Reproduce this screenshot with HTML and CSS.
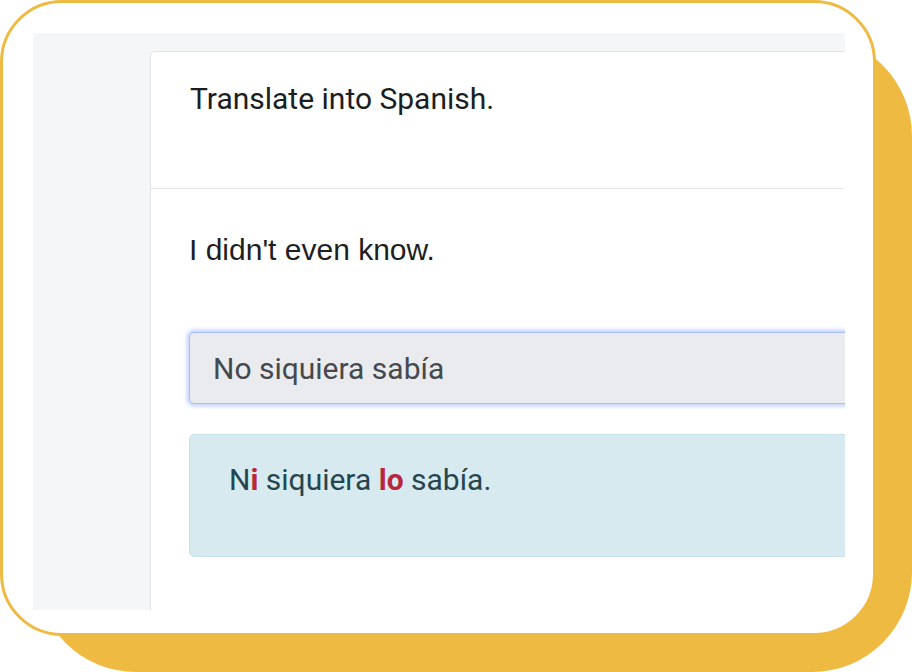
FILE: index.html
```html
<!DOCTYPE html>
<html>
<head>
<meta charset="utf-8">
<link rel="stylesheet" href="styles.css">
</head>
<body>
<div class="frame">
  <div class="backdrop"></div>
  <div class="window">
    <div class="app">
      <div class="card">
        <div class="card-header">
          <p class="prompt">Translate into Spanish.</p>
        </div>
        <div class="card-body">
          <p class="source">I didn't even know.</p>
          <div class="answer">No siquiera sabía</div>
          <div class="correction">N<b class="fix">i</b> siquiera <b class="fix">lo</b> sabía.</div>
        </div>
      </div>
    </div>
  </div>
</div>
</body>
</html>
```
FILE: styles.css
```css
html, body {
  margin: 0;
  padding: 0;
  background: #ffffff;
}

.frame {
  position: relative;
  width: 912px;
  height: 672px;
  overflow: hidden;
}

.backdrop {
  position: absolute;
  left: 36px;
  top: 36px;
  width: 876px;
  height: 636px;
  background: #efba41;
  border-radius: 100px;
}

.window {
  position: relative;
  box-sizing: border-box;
  width: 876px;
  height: 636px;
  border: 3px solid #efba41;
  border-radius: 62px;
  background: #ffffff;
  padding: 30px 28px 23px 30px;
  overflow: hidden;
}

.app {
  height: 100%;
  background: #f5f6f8;
  padding: 18px 0 0 117px;
  box-sizing: border-box;
  overflow: hidden;
}

.card {
  width: 900px;
  height: 700px;
  background: #ffffff;
  border: 1px solid #e1e3e6;
  border-radius: 5px 0 0 0;
}

.card-header {
  height: 137px;
  border-bottom: 1px solid #e4e6e9;
  box-sizing: border-box;
  padding: 26px 39px 0;
}

.prompt {
  margin: 0;
  font-family: Roboto, "Liberation Sans", sans-serif;
  font-size: 30px;
  line-height: 42px;
  color: #1b1e21;
}

.card-body {
  padding: 40px 0 0 38px;
}

.source {
  margin: 0;
  font-family: "Liberation Sans", Arial, sans-serif;
  font-size: 30px;
  line-height: 42px;
  color: #1d1f22;
}

.answer {
  margin-top: 61px;
  box-sizing: border-box;
  height: 72px;
  padding: 0 23px;
  display: flex;
  align-items: center;
  background: #e9ebee;
  border: 1px solid #a9bff5;
  border-radius: 5px 0 0 5px;
  box-shadow: 0 0 4px 2px rgba(110, 145, 255, 0.45);
  font-family: Roboto, "Liberation Sans", sans-serif;
  font-size: 30px;
  color: #45494e;
}

.correction {
  margin-top: 30px;
  box-sizing: border-box;
  height: 123px;
  padding: 24px 39px;
  background: #d7eaf0;
  border: 1px solid #c8e2ea;
  border-radius: 5px 0 0 5px;
  font-family: Roboto, "Liberation Sans", sans-serif;
  font-size: 30px;
  line-height: 42px;
  color: #26464f;
}

.fix {
  font-weight: 700;
  color: #b7283c;
}
```
